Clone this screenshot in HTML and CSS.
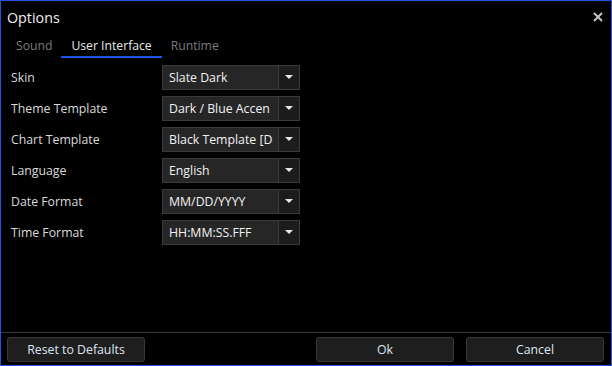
FILE: index.html
```html
<!DOCTYPE html>
<html lang="en">
<head>
  <meta charset="UTF-8">
  <title>Options</title>
  <link rel="stylesheet" href="styles.css">
</head>
<body>
  <div class="window">
    <!-- title bar -->
    <div class="titlebar">
      <span class="title">Options</span>
      <svg class="close" width="10" height="10" viewBox="0 0 10 10">
        <path d="M1 1 L9 9 M9 1 L1 9" stroke="#c4c4c4" stroke-width="2"/>
      </svg>
    </div>

    <!-- tabs -->
    <div class="tabs">
      <span class="tab">Sound</span>
      <span class="tab active">User Interface</span>
      <span class="tab">Runtime</span>
    </div>

    <!-- settings -->
    <div class="form">
      <div class="row">
        <span class="label">Skin</span>
        <div class="combo"><span class="value">Slate Dark</span><span class="drop"></span></div>
      </div>
      <div class="row">
        <span class="label">Theme Template</span>
        <div class="combo"><span class="value">Dark / Blue Accen</span><span class="drop"></span></div>
      </div>
      <div class="row">
        <span class="label">Chart Template</span>
        <div class="combo"><span class="value">Black Template [D</span><span class="drop"></span></div>
      </div>
      <div class="row">
        <span class="label">Language</span>
        <div class="combo"><span class="value">English</span><span class="drop"></span></div>
      </div>
      <div class="row">
        <span class="label">Date Format</span>
        <div class="combo"><span class="value">MM/DD/YYYY</span><span class="drop"></span></div>
      </div>
      <div class="row">
        <span class="label">Time Format</span>
        <div class="combo"><span class="value">HH:MM:SS.FFF</span><span class="drop"></span></div>
      </div>
    </div>

    <!-- buttons -->
    <div class="footer">
      <button class="btn">Reset to Defaults</button>
      <span class="spacer"></span>
      <button class="btn">Ok</button>
      <button class="btn">Cancel</button>
    </div>
  </div>
</body>
</html>
```

FILE: styles.css
```css
html, body {
  margin: 0;
  background: #000;
}
body {
  font-family: "Open Sans", "Noto Sans", sans-serif;
  color: #dcdcdc;
}
.window {
  width: 612px;
  height: 366px;
  box-sizing: border-box;
  border: 1px solid #1f55e6;
  display: flex;
  flex-direction: column;
}
/* title bar */
.titlebar {
  height: 35px;
  display: flex;
  align-items: center;
  padding: 0 8px 0 6px;
}
.title {
  font-size: 14.3px;
  color: #f0f0f0;
  flex: 1;
  margin-top: -2px;
}
.close {
  margin-top: -3px;
}
/* tabs */
.tabs {
  display: flex;
  padding-left: 5px;
  height: 22px;
}
.tab {
  font-size: 12.2px;
  line-height: 20px;
  padding: 0 10px;
  margin-right: -1px;
  color: #7c7c7c;
  border-bottom: 2px solid transparent;
}
.tab.active {
  color: #e8e8e8;
  border-bottom-color: #1f55e6;
}
/* rows */
.form {
  margin-top: 7px;
  display: flex;
  flex-direction: column;
  gap: 6px;
  flex: 1;
}
.row {
  display: flex;
  align-items: center;
  height: 25px;
}
.label {
  width: 151px;
  padding-left: 10px;
  font-size: 12.3px;
  color: #dadada;
}
.combo {
  width: 138px;
  height: 25px;
  box-sizing: border-box;
  border: 1px solid #3a3a3a;
  background: #262626;
  display: flex;
}
.value {
  flex: 1;
  overflow: hidden;
  white-space: nowrap;
  padding-left: 6px;
  font-size: 12.3px;
  line-height: 23px;
  color: #f2f2f2;
}
.drop {
  width: 20px;
  border-left: 1px solid #3a3a3a;
  background: #1c1c1c;
  position: relative;
}
.drop::after {
  content: "";
  position: absolute;
  left: 6px;
  top: 9px;
  border-left: 4px solid transparent;
  border-right: 4px solid transparent;
  border-top: 4px solid #e6e6e6;
}
/* footer */
.footer {
  border-top: 1px solid #3a3a3a;
  display: flex;
  padding: 4px 7px 3px 6px;
  gap: 12px;
}
.spacer {
  flex: 1;
}
.btn {
  width: 138px;
  height: 25px;
  background: #1e1e1e;
  border: 1px solid #383838;
  border-radius: 3px;
  color: #dfe6f2;
  font-family: "Open Sans", "Noto Sans", sans-serif;
  font-size: 12.3px;
  padding: 0;
}
```
